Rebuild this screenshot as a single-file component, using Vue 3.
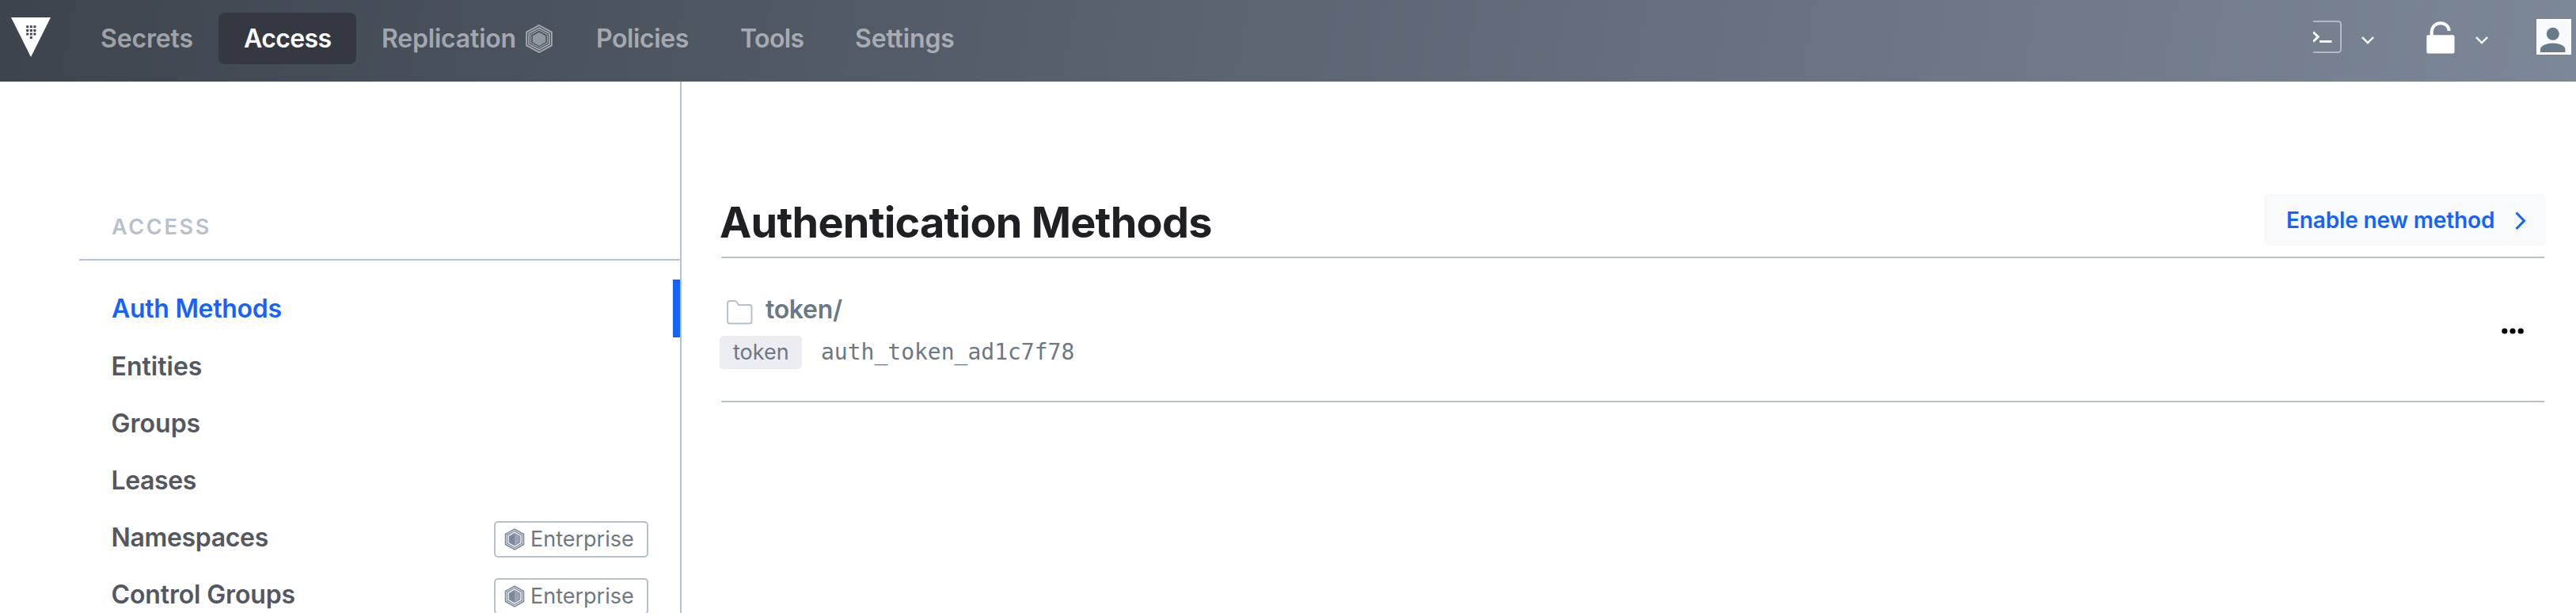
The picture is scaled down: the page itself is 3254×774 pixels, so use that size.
<script setup>
const nav = [
  { label: 'Secrets', key: 'secrets' },
  { label: 'Access', key: 'access', active: true },
  { label: 'Replication', key: 'replication', badge: true },
  { label: 'Policies', key: 'policies' },
  { label: 'Tools', key: 'toolbox' },
  { label: 'Settings', key: 'settings' },
]
const menu = [
  { label: 'Auth Methods', key: 'auth', active: true },
  { label: 'Entities', key: 'entities' },
  { label: 'Groups', key: 'groups' },
  { label: 'Leases', key: 'leases' },
  { label: 'Namespaces', key: 'namespaces', enterprise: true },
  { label: 'Control Groups', key: 'control', enterprise: true },
]
</script>

<template>
  <div class="page">
    <header class="topbar">
      <svg class="logo" viewBox="0 0 50 50">
        <path fill="#fff" d="M0 0H50L25 50Z" />
        <path fill="#3f4650" d="M19.2 10.3h3v3h-3zM23.8 10.3h3v3h-3zM28.4 10.3h3v3h-3zM19.2 14.9h3v3h-3zM23.8 14.9h3v3h-3zM28.4 14.9h3v3h-3zM19.2 19.4h3v3h-3zM23.8 19.4h3v3h-3zM28.4 19.4h3v3h-3zM23.8 24h3v3h-3z" />
      </svg>
      <nav class="nav">
        <a v-for="n in nav" :key="n.key" :class="['nav-item', n.key, { active: n.active }]">
          <span>{{ n.label }}</span>
          <svg v-if="n.badge" class="nav-hex" viewBox="0 0 34 36">
            <path fill="none" stroke="currentColor" stroke-width="1.900" d="M17 1 32.900 9.600V26.400L17 35 1.100 26.400V9.600Z" />
            <path fill="none" stroke="currentColor" stroke-width="1.700" d="M17 4.200 29.900 11.200V24.800L17 31.800 4.100 24.800V11.200Z" />
            <path fill="none" stroke="currentColor" stroke-width="1.100" d="M17 7.100 27.400 12.800V23.200L17 28.900 6.600 23.200V12.800Z" />
            <path fill="currentColor" fill-opacity=".8" d="M17 9.700 25.200 14.200V22.200L17 26.900 8.800 22.200V14.200Z" />
          </svg>
        </a>
      </nav>
      <div class="tools">
        <svg class="terminal" viewBox="0 0 36 41">
          <path fill="none" stroke="#fff" stroke-opacity=".45" stroke-width="2" d="M0 1H31Q35 1 35 5V36Q35 40 31 40H0" />
          <path fill="none" stroke="#fff" stroke-width="2.800" d="M0 14.500 6.300 20.500 0 26.500M8 26.300H23.500" />
        </svg>
        <svg class="caret first" viewBox="0 0 16 10"><path fill="none" stroke="#fff" stroke-width="2.400" d="M.900 1 8 8 15.100 1" /></svg>
        <svg class="lock" viewBox="0 0 36 41">
          <path fill="none" stroke="#fff" stroke-width="4" d="M6.700 19V14C6.700 7 11.500 2.200 17.800 2.200 23.500 2.200 28.300 6 28.700 11.800" />
          <rect x=".3" y="17.200" width="35.200" height="23.300" rx="1.800" fill="#fff" />
        </svg>
        <svg class="caret second" viewBox="0 0 16 10"><path fill="none" stroke="#fff" stroke-width="2.400" d="M.900 1 8 8 15.100 1" /></svg>
        <svg class="user" viewBox="0 0 44 45">
          <rect width="44" height="45" fill="#fff" />
          <rect x="2" y="2" width="40" height="41" fill="#f7f9fb" />
          <circle cx="20.800" cy="18.800" r="8" fill="#6b7a8a" />
          <path fill="#6b7a8a" d="M5 42V37.500C6 33.500 13 30.600 20.800 30.600S35.500 33.500 36.400 37.500V42Z" />
        </svg>
      </div>
    </header>

    <div class="body">
      <aside class="sidebar">
        <p class="side-label">ACCESS</p>
        <a v-for="i in menu" :key="i.key" :class="['side-item', i.key, { active: i.active }]">
          <span>{{ i.label }}</span>
          <span v-if="i.enterprise" class="badge">
            <svg class="badge-hex" viewBox="0 0 26 28">
              <path fill="#7d899a" d="M13 .2 25.300 7V21L13 27.800.700 21V7Z" />
              <path fill="none" stroke="#fff" stroke-width=".8" d="M13 2.500 23.300 8.200V19.800L13 25.500 2.700 19.800V8.200Z" />
              <path fill="#8b95a5" stroke="#fff" stroke-width="1.200" d="M13 4.900 21 9.500V18.500L13 23.100 5 18.500V9.500Z" />
              <path fill="#7d899a" d="M13 6.700V21.300L6.700 17.600V10.400Z" />
              <path fill="#9aa3b1" d="M13 6.700V21.300L19.300 17.600V10.400Z" />
            </svg>
            <span>Enterprise</span>
          </span>
        </a>
      </aside>

      <main class="content">
        <div class="head">
          <h1>Authentication Methods</h1>
          <a class="enable"><span>Enable new method</span>
            <svg viewBox="0 0 14 24"><path fill="none" stroke="#1563ff" stroke-width="3" d="M1.500 1.500 11.500 11.700 1.500 22" /></svg>
          </a>
        </div>
        <div class="row">
          <div>
            <div class="name">
              <svg class="folder" viewBox="0 0 33 31">
                <path fill="none" stroke="#b8bfcd" stroke-width="2" d="M4 1H10.500Q12 1 12.700 2.300L14.800 6H28.500Q31.500 6 31.500 9V26.500Q31.500 29.500 28.500 29.500H4Q1 29.500 1 26.500V4Q1 1 4 1Z" />
              </svg>
              <span>token/</span>
            </div>
            <div class="meta">
              <span class="chip">token</span>
              <code>auth_token_ad1c7f78</code>
            </div>
          </div>
          <svg class="dots" viewBox="0 0 28 8"><circle cx="3.800" cy="4" r="3.600" /><circle cx="14" cy="4" r="3.600" /><circle cx="24.200" cy="4" r="3.600" /></svg>
        </div>
      </main>
    </div>
  </div>
</template>

<style>
body { margin: 0; background: #fff; }
</style>

<style scoped>
* { box-sizing: border-box; }
svg { display: block; flex: none; }
.page { width: 3254px; height: 774px; overflow: hidden; background: #fff; font-family: Inter, "Liberation Sans", sans-serif; font-size: 32px; color: #525761; display: flex; flex-direction: column; white-space: nowrap; }
.topbar { height: 103px; flex: none; display: flex; align-items: flex-start; background: linear-gradient(100deg, #3d444e, #7c8797); }
.logo { width: 50px; height: 50px; margin: 22px 31px 0 14px; }
.nav { display: grid; grid-template-columns: 181px 174px 271px 182px 145px 190px; margin-top: 16px; font-weight: 600; color: rgba(255, 255, 255, .5); }
.nav-item { height: 65px; padding-left: 32px; display: flex; align-items: center; line-height: 65px; border-radius: 8px; letter-spacing: -.15px; }
.nav-item.active { background: #343941; color: #fff; }
.nav-item.access, .nav-item.toolbox { letter-spacing: -.6px; }
.nav-item.replication { letter-spacing: -.2px; }
.nav-item.policies { letter-spacing: -.4px; }
.nav-hex { width: 34px; height: 36px; margin-left: 12px; }
.tools { margin-left: auto; display: flex; align-items: flex-start; padding-right: 6px; }
.terminal { width: 36px; height: 41px; margin-top: 26px; }
.caret { width: 16px; height: 10px; margin: 46px 0 0 25px; }
.lock { width: 36px; height: 41px; margin: 27px 0 0 66px; }
.second { margin-left: 26px; }
.user { width: 44px; height: 45px; margin: 24px 0 0 61px; }
.body { display: flex; flex: 1; min-height: 0; }
.sidebar { width: 861px; padding-left: 100px; border-right: 2px solid #b8bfcd; }
.side-label { margin: 0 0 24px; height: 226px; padding: 167px 0 0 41px; border-bottom: 2px solid #b8bfcd; font-size: 27px; line-height: 34px; font-weight: 600; color: #b8bfcd; letter-spacing: 2.700px; }
.side-item { height: 72px; padding: 1px 40px 0 40.6px; display: flex; align-items: center; justify-content: space-between; font-weight: 600; line-height: 72px; }
.side-item.active { height: 73px; padding-left: 41px; color: #1563ff; border-right: 9px solid #1563ff; letter-spacing: -.3px; }
.leases { letter-spacing: -.4px; }
.namespaces { letter-spacing: -.35px; }
.control { letter-spacing: -.15px; }
.badge { width: 195px; height: 46px; margin-top: 5px; border: 2px solid #b8bfcd; border-radius: 5px; display: flex; align-items: center; padding-left: 11px; font-size: 27px; line-height: 42px; font-weight: 400; color: #6b7886; letter-spacing: 0; }
.badge-hex { width: 26px; height: 28px; margin-right: 7px; }
.content { flex: 1; padding: 0 40px 0 50px; }
.head { height: 223px; border-bottom: 2px solid #b8bfcd; display: flex; justify-content: space-between; }
h1 { margin: 144px 0 0 -2px; font-size: 54px; line-height: 68px; font-weight: 700; color: #1f2024; letter-spacing: -.77px; }
.enable { width: 356px; height: 65px; margin: 142px -2px 0 0; padding: 0 25px 0 28px; display: flex; align-items: center; justify-content: space-between; border-radius: 5px; background: #f7f9fb; color: #1563ff; font-size: 28px; font-weight: 600; letter-spacing: -.15px; }
.enable svg { width: 14px; height: 24px; margin-top: 2px; }
.row { height: 182px; padding-top: 47px; display: flex; justify-content: space-between; border-bottom: 2px solid #b8bfcd; }
.name { display: flex; height: 40px; line-height: 36px; font-weight: 600; color: #6b7886; letter-spacing: -.3px; }
.folder { width: 33px; height: 31px; margin: 6px 16px 0 7px; }
.meta { display: flex; margin: 11px 0 0 -2px; line-height: 42px; font-size: 27px; color: #6b7886; }
.chip { width: 104px; height: 42px; padding-left: 17px; border-radius: 5px; background: #ecedf2; }
code { margin-left: 24px; font: 28px/42px "DejaVu Sans Mono", monospace; }
.dots { width: 28px; height: 8px; margin: 41px 26px 0 0; fill: #000; }
</style>
